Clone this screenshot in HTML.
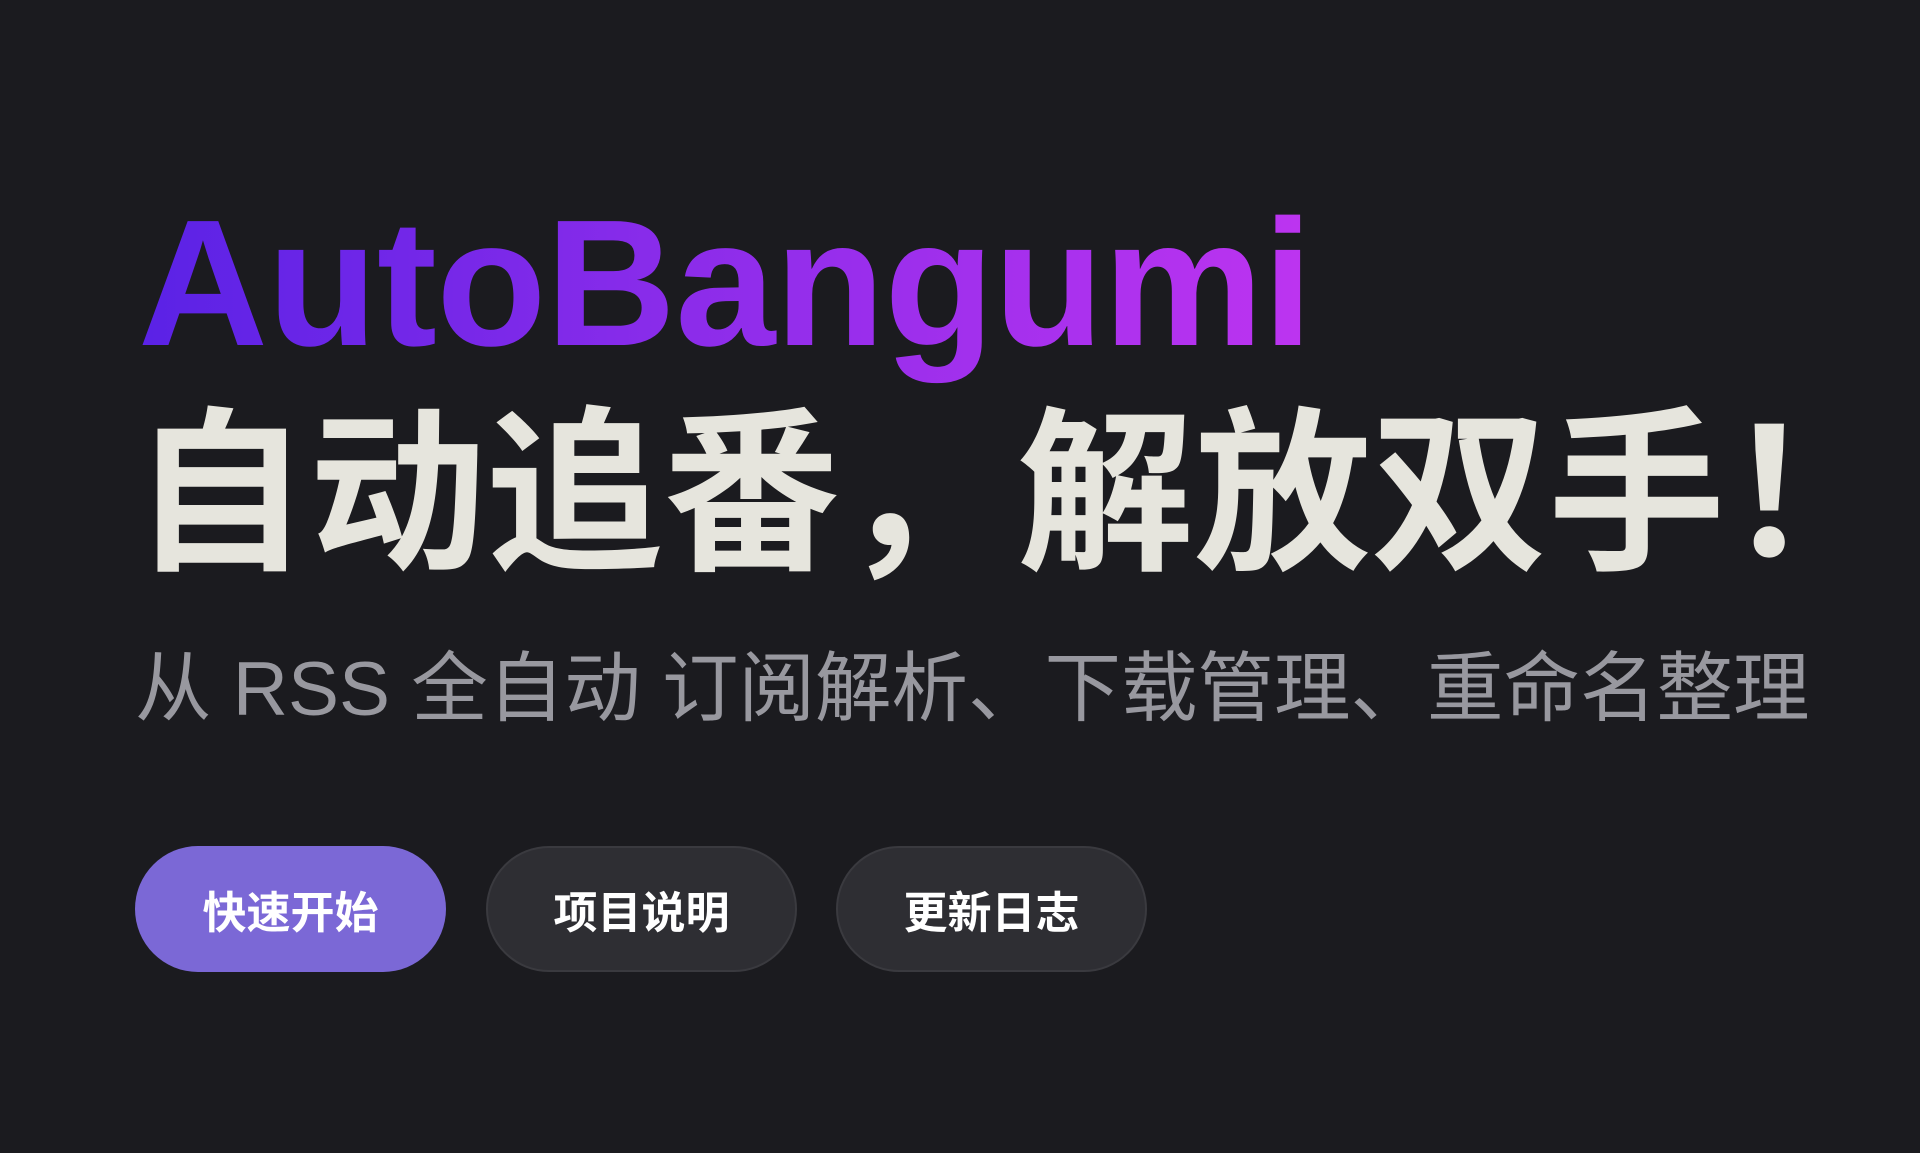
<!DOCTYPE html>
<html><head><meta charset="utf-8"><style>
html,body{margin:0;padding:0;background:#1b1b1f;width:1920px;height:1153px;overflow:hidden}
.a{position:absolute;white-space:nowrap;line-height:1}
.t1{left:138px;top:180px;font:bold 180px "Liberation Sans",sans-serif;letter-spacing:-0.5px;background:linear-gradient(90deg,#5a22e6 0%,#8a2cea 45%,#bd34f0 100%);-webkit-background-clip:text;background-clip:text;color:transparent;padding-bottom:40px}
.t2{left:132px;top:351px;font:bold 177px "Liberation Sans","Noto Sans CJK SC",sans-serif;color:#e6e5dd}
.t3{left:135px;top:627px;font:76.5px "Liberation Sans","Noto Sans CJK SC",sans-serif;color:#98989f}
.b{position:absolute;top:846px;width:311px;height:126px;border-radius:63px;box-sizing:border-box;display:flex;align-items:center;justify-content:center;font:bold 44px "Liberation Sans","Noto Sans CJK SC",sans-serif;color:#fff}
.b1{left:135px;background:#7b68d6}
.b2{left:486px;background:#2e2e33;border:2px solid #3a3a3f}
.b3{left:836px;background:#2e2e33;border:2px solid #3a3a3f}
</style></head><body>
<div class="a t1">AutoBangumi</div>
<div class="a t2">自动追番，解放双手！</div>
<div class="a t3">从 RSS 全自动 订阅解析、下载管理、重命名整理</div>
<div class="b b1">快速开始</div>
<div class="b b2">项目说明</div>
<div class="b b3">更新日志</div>
</body></html>
